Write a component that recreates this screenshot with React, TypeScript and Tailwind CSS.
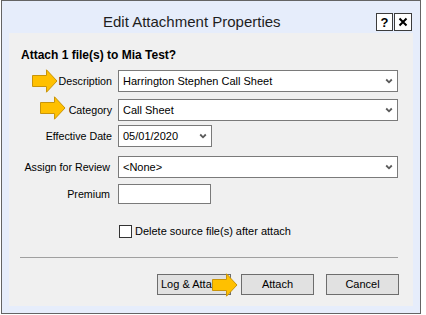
import React from "react";

const Chevron = () => (
  <svg width="8" height="6" viewBox="0 0 8 6" className="block">
    <path d="M1.2 1.5 L4 4.3 L6.8 1.5" fill="none" stroke="#5a5a5a" strokeWidth="1.8" />
  </svg>
);

const Arrow = ({ className }: { className: string }) => (
  <svg width="26" height="24" viewBox="0 0 26 24" className={className}>
    <polygon
      points="0.5,6.5 14.5,6.5 14.5,0.8 25,12 14.5,23.2 14.5,17.5 0.5,17.5"
      fill="#ffc000"
      stroke="#c8940a"
      strokeWidth="1"
      strokeLinejoin="miter"
    />
  </svg>
);

const Select = ({ w, text, h = "h-[22px]" }: { w: string; text: string; h?: string }) => (
  <div className={`${w} ${h} ml-[6px] border border-[#7a7a7a] bg-white flex items-center pl-[4px] pr-[4px] text-[11px]`}>
    <span className="flex-1 truncate">{text}</span>
    <Chevron />
  </div>
);

export default function App() {
  return (
    <div
      className="relative w-[426px] h-[315px] bg-white text-[11px] text-black"
      style={{ fontFamily: '"Liberation Sans", Arial, sans-serif' }}
    >
      <div className="ml-[1px] w-[420px] h-[314px] border border-[#646464] bg-[#e6edfb] flex flex-col">
        {/* title bar */}
        <div className="h-[32px] flex items-start pt-[12px] pl-[101px] pr-[8px]">
          <span className="text-[15px] leading-[18px] text-[#1e1e1e]">Edit Attachment Properties</span>
          <div className="ml-auto flex gap-[1px]">
            <div className="w-[17px] h-[18px] border border-[#3c3c3c] bg-white flex items-center justify-center text-[13px] font-bold leading-none">
              ?
            </div>
            <div className="w-[18px] h-[18px] border border-[#3c3c3c] bg-white flex items-center justify-center">
              <svg width="10" height="10" viewBox="0 0 10 10">
                <path d="M1.5 1.5 L8.5 8.5 M8.5 1.5 L1.5 8.5" stroke="#000" strokeWidth="2" />
              </svg>
            </div>
          </div>
        </div>

        {/* panel */}
        <div className="ml-[7px] w-[404px] h-[273px] bg-[#f0f0f0] flex flex-col text-[10.7px]">
          <div className="pl-[12px] pt-[14px] h-[30px] leading-[16px] text-[12px] font-bold">
            Attach 1 file(s) to Mia Test?
          </div>

          <div className="mt-[7px] flex items-center h-[22px]">
            <div className="w-[103px] text-right">Description</div>
            <Select w="w-[280px]" text="Harrington Stephen Call Sheet" />
          </div>

          <div className="mt-[7px] flex items-center h-[22px]">
            <div className="w-[103px] text-right">Category</div>
            <Select w="w-[280px]" text="Call Sheet" />
          </div>

          <div className="mt-[4px] flex items-center h-[22px]">
            <div className="w-[103px] text-right">Effective Date</div>
            <Select w="w-[94px]" text="05/01/2020" />
          </div>

          <div className="mt-[9px] flex items-center h-[22px]">
            <div className="w-[103px] text-right pr-[2px]">Assign for Review</div>
            <Select w="w-[280px]" text="<None>" />
          </div>

          <div className="mt-[6px] flex items-center h-[20px]">
            <div className="w-[103px] text-right pr-[2px]">Premium</div>
            <div className="ml-[6px] w-[93px] h-[20px] border border-[#7a7a7a] bg-white" />
          </div>

          <div className="mt-[21px] flex items-center h-[13px] pl-[110px] text-[11px]">
            <div className="w-[13px] h-[13px] border border-[#333333] bg-white" />
            <span className="ml-[3px]">Delete source file(s) after attach</span>
          </div>

          <div className="mt-[19px] ml-[11px] w-[378px] h-px bg-[#a0a0a0]" />

          <div className="mt-[16px] flex h-[21px] text-[11px]">
            <div className="ml-[148px] w-[74px] h-[21px] border border-[#6d6d6d] bg-[#e1e1e1] flex items-center pl-[3px] overflow-hidden whitespace-nowrap">
              Log &amp; Atta
            </div>
            <div className="ml-[10px] w-[73px] h-[21px] border border-[#6d6d6d] bg-[#e1e1e1] flex items-center justify-center">
              Attach
            </div>
            <div className="ml-[12px] w-[73px] h-[21px] border border-[#6d6d6d] bg-[#e1e1e1] flex items-center justify-center">
              Cancel
            </div>
          </div>
        </div>
      </div>

      <Arrow className="absolute left-[32px] top-[69px]" />
      <Arrow className="absolute left-[40px] top-[96px]" />
      <Arrow className="absolute left-[212px] top-[273px]" />
    </div>
  );
}
